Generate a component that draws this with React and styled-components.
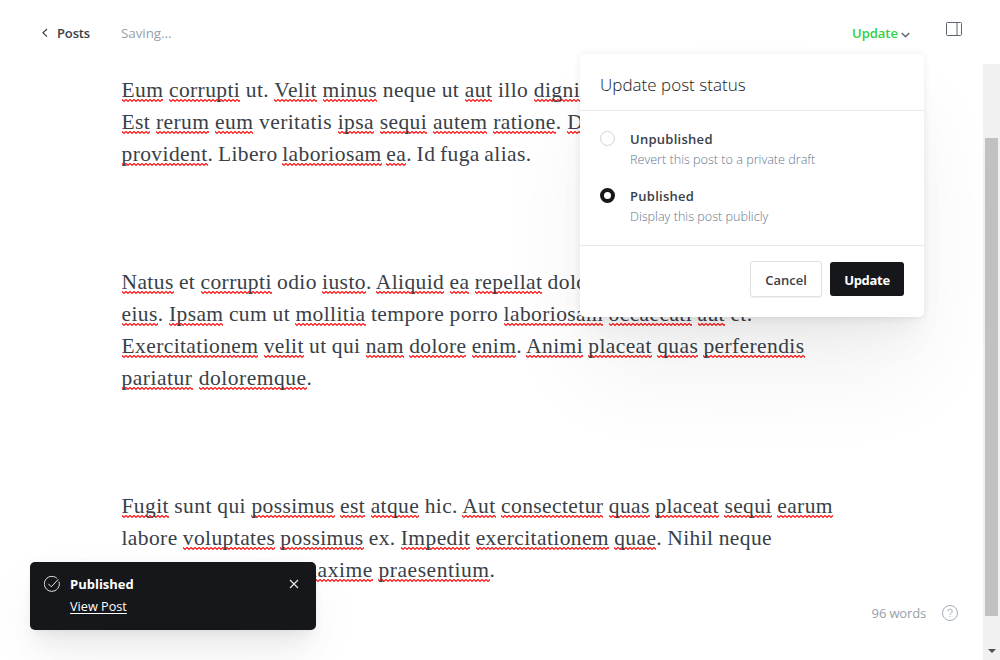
import React from 'react';
import styled, { createGlobalStyle } from 'styled-components';

const Global = createGlobalStyle`
  * { box-sizing: border-box; }
  body { margin: 0; background: #fff; overflow: hidden; font-family: 'Open Sans', 'Noto Sans', sans-serif; }
`;

const Screen = styled.div`
  position: relative;
  height: 660px;
  display: flex;
  flex-direction: column;
  overflow: hidden;
`;

const Header = styled.header`
  height: 64px;
  flex: none;
  display: flex;
  align-items: center;
  padding: 2px 38px 0 42px;
  font-size: 13px;
  line-height: 20px;
`;

const BackLink = styled.a`
  display: flex;
  align-items: center;
  gap: 9px;
  width: 79px;
  font-weight: 600;
  color: #394047;
  letter-spacing: -0.15px;
`;

const Status = styled.span`
  flex: 1;
  color: #95a1ad;
  font-size: 13.4px;
  letter-spacing: -0.05px;
`;

const Trigger = styled.button`
  display: flex;
  align-items: center;
  gap: 3px;
  margin-right: 36px;
  padding: 0;
  border: 0;
  background: none;
  font: 600 13px/20px 'Open Sans', sans-serif;
  color: #30cf43;
`;

const Chevron = styled.svg`
  margin-top: 3px;
`;

const PanelIcon = styled.svg`
  margin-top: -8px;
`;

const Body = styled.div`
  flex: 1;
  min-height: 0;
  display: flex;
`;

const Article = styled.main`
  flex: 1;
  padding: 10px 0 0 121.5px;
  font-family: 'Liberation Serif', serif;
  font-size: 21.5px;
  color: #394047;
`;

const Paragraph = styled.p`
  margin: 0 0 96px;
`;

const Line = styled.span`
  display: block;
  width: ${p => p.$w}px;
  height: 32px;
  line-height: 32px;
  letter-spacing: ${p => p.$ls || 0.4}px;
  word-spacing: -1.3px;
  white-space: nowrap;
  text-align-last: justify;
`;

const Misspelt = styled.span`
  background: url("data:image/svg+xml,%3Csvg xmlns='http://www.w3.org/2000/svg' width='4' height='3'%3E%3Cpath d='M-1 -.5L2 2.4L5 -.5' fill='none' stroke='%23f00' stroke-width='1.05'/%3E%3C/svg%3E") repeat-x left bottom;
`;

const Scrollbar = styled.div`
  width: 17px;
  background: #f1f1f1;
  display: flex;
  flex-direction: column;
  align-items: center;
  justify-content: flex-end;
`;

const Thumb = styled.div`
  width: 13px;
  height: 478px;
  background: #c1c1c1;
  margin-bottom: 33px;
`;

const Arrow = styled.div`
  border: 4px solid transparent;
  border-top-color: #505050;
  border-bottom: 0;
  margin-bottom: 7px;
`;

const Popover = styled.section`
  position: absolute;
  left: 580px;
  top: 54px;
  width: 344px;
  height: 263px;
  border-radius: 5px;
  background: #fff;
  box-shadow: 0 0 7px rgba(0,0,0,.08), 0 5.1px 5.3px -5px rgba(0,0,0,.015), 0 9.5px 10px -5px rgba(0,0,0,.02), 0 17px 17.9px -5px rgba(0,0,0,.022), 0 31.8px 33.4px -5px rgba(0,0,0,.028), 0 60px 100px -5px rgba(0,0,0,.06);
`;

const PopoverTitle = styled.h2`
  margin: 0;
  height: 57px;
  padding: 19px 20px 0;
  border-bottom: 1px solid #e5e9ed;
  font-size: 17px;
  line-height: 24px;
  font-weight: 300;
  letter-spacing: 0.02px;
  color: #15191d;
`;

const Options = styled.div`
  height: 134px;
  padding: 18px 20px 0;
  display: flex;
  flex-direction: column;
  gap: 17px;
`;

const Option = styled.div`
  height: 40px;
  display: flex;
  gap: 15px;
`;

const Radio = styled.span`
  width: 15px;
  height: 15px;
  margin-top: 2px;
  border-radius: 50%;
  border: ${p => (p.$on ? '4px solid #15171a' : '1px solid #ced4d9')};
`;

const OptionName = styled.div`
  font-size: 13px;
  line-height: 20px;
  font-weight: 600;
  letter-spacing: 0.27px;
  color: #394047;
`;

const OptionHint = styled.div`
  padding-top: 1px;
  font-size: 12.6px;
  line-height: 20px;
  font-weight: 300;
  color: #5f7890;
`;

const Actions = styled.footer`
  border-top: 1px solid #e5e9ed;
  padding: 15px 20px 0;
  display: flex;
  align-items: center;
  justify-content: flex-end;
  gap: 8px;
`;

const Button = styled.button`
  width: ${p => (p.$dark ? 74 : 72)}px;
  height: ${p => (p.$dark ? 34 : 36)}px;
  padding: 2px 0 0;
  border: ${p => (p.$dark ? '0' : '1px solid #dde1e5')};
  border-radius: 3px;
  background: ${p => (p.$dark ? '#15171a' : '#fff')};
  color: ${p => (p.$dark ? '#fff' : '#394047')};
  box-shadow: ${p => (p.$dark ? 'none' : '0 1px 1px rgba(0,0,0,.06)')};
  font: ${p => (p.$dark ? 700 : 600)} 13px/20px 'Open Sans', sans-serif;
  letter-spacing: ${p => (p.$dark ? -0.3 : 0)}px;
`;

const Toast = styled.aside`
  position: absolute;
  left: 30px;
  top: 562px;
  width: 286px;
  height: 68px;
  padding: 12px 17px 0 14px;
  display: flex;
  gap: 10px;
  border-radius: 5px;
  background: #15171a;
  color: #fff;
  font-size: 13px;
  box-shadow: 0 0 7px rgba(0,0,0,.04), 0 9px 10px -5px rgba(0,0,0,.03), 0 17px 18px -5px rgba(0,0,0,.03), 0 32px 34px -5px rgba(0,0,0,.03), 0 20px 60px rgba(0,0,0,.04);
`;

const CheckIcon = styled.svg`
  margin-top: 2px;
`;

const CloseIcon = styled.svg`
  margin-top: 5px;
`;

const ToastText = styled.div`
  flex: 1;
`;

const ToastTitle = styled.div`
  line-height: 20px;
  font-weight: 700;
`;

const ToastLink = styled.a`
  display: block;
  margin-top: 2px;
  font-size: 12.7px;
  line-height: 20px;
  text-decoration: underline;
  text-underline-offset: 2px;
`;

const Footer = styled.div`
  position: absolute;
  right: 42px;
  top: 604px;
  display: flex;
  align-items: center;
  gap: 16px;
  font-size: 13px;
  line-height: 19px;
  letter-spacing: -0.15px;
  color: #95a1ad;
`;

const HelpIcon = styled.svg`
  margin-top: -2px;
`;

// Underscores wrap the words flagged by the spell checker.
const paragraphs = [
  [
    [519.5, '_Eum_ _corrupti_ ut. _Velit_ _minus_ neque ut _aut_ illo _dignissimos_'],
    [525, '_Est_ _rerum_ _eum_ veritatis _ipsa_ _sequi_ _autem_ _ratione_. _Dolorem_'],
    [410, '_provident_. Libero _laboriosam_ _ea_. Id fuga alias.'],
  ],
  [
    [473.5, '_Natus_ et _corrupti_ odio _iusto_. _Aliquid_ _ea_ _repellat_ dolor'],
    [631, '_eius_. _Ipsam_ cum ut _mollitia_ tempore porro _laboriosam_ _occaecati_ _aut_ et.'],
    [683, '_Exercitationem_ _velit_ ut qui _nam_ _dolore_ _enim_. _Animi_ _placeat_ _quas_ _perferendis_'],
    [191, '_pariatur_ _doloremque_.', 0.52],
  ],
  [
    [711.5, '_Fugit_ sunt qui _possimus_ _est_ _atque_ hic. _Aut_ _consectetur_ _quas_ _placeat_ _sequi_ _earum_'],
    [650.5, 'labore _voluptates_ _possimus_ ex. _Impedit_ _exercitationem_ _quae_. Nihil neque'],
    [374, '_voluptates_ _eligendi_ _maxime_ _praesentium_.', 0.55],
  ],
];

const renderText = text =>
  text.split(/(_[^_]+_)/).map((t, i) => (t[0] === '_' ? <Misspelt key={i}>{t.slice(1, -1)}</Misspelt> : t));

export default function App() {
  return (
    <Screen>
      <Global />
      <Header>
        <BackLink>
          <svg width="6" height="10" viewBox="0 0 6 10" fill="none" stroke="#394047" strokeWidth="1.2"><path d="M5 1L1 4.8l4 3.8" /></svg>
          Posts
        </BackLink>
        <Status>Saving...</Status>
        <Trigger>
          Update
          <Chevron width="9" height="6" viewBox="0 0 9 6" fill="none" stroke="#626d79" strokeWidth="1.5"><path d="M.7 1l3.8 3.6L8.3 1" /></Chevron>
        </Trigger>
        <PanelIcon width="16" height="14" viewBox="0 0 16 14" fill="none" stroke="#5d666f"><rect x=".5" y=".5" width="15" height="13" rx="1" /><path d="M11 .5v13" /></PanelIcon>
      </Header>
      <Body>
        <Article>
          {paragraphs.map((lines, i) => (
            <Paragraph key={i}>
              {lines.map(([w, text, ls]) => <Line key={text} $w={w} $ls={ls}>{renderText(text)}</Line>)}
            </Paragraph>
          ))}
        </Article>
        <Scrollbar><Thumb /><Arrow /></Scrollbar>
      </Body>
      <Footer>
        96 words
        <HelpIcon width="16" height="16" viewBox="0 0 16 16" fill="none" stroke="#a3aebb"><circle cx="8" cy="8" r="7.5" /><path d="M5.8 6.3a2.2 2.2 0 1 1 3.3 1.9C8.3 8.6 8 8.9 8 9.8M8 11.2v1" /></HelpIcon>
      </Footer>
      <Popover>
        <PopoverTitle>Update post status</PopoverTitle>
        <Options>
          <Option>
            <Radio />
            <div><OptionName>Unpublished</OptionName><OptionHint>Revert this post to a private draft</OptionHint></div>
          </Option>
          <Option>
            <Radio $on />
            <div><OptionName>Published</OptionName><OptionHint>Display this post publicly</OptionHint></div>
          </Option>
        </Options>
        <Actions><Button>Cancel</Button><Button $dark>Update</Button></Actions>
      </Popover>
      <Toast>
        <CheckIcon width="16" height="16" viewBox="0 0 16 16" fill="none" stroke="#e4e6e8"><path d="M15 5.6A7.5 7.5 0 1 1 12.9 2.3M4.3 7.8l3 3 7-7.5" /></CheckIcon>
        <ToastText><ToastTitle>Published</ToastTitle><ToastLink>View Post</ToastLink></ToastText>
        <CloseIcon width="10" height="10" viewBox="0 0 10 10" stroke="#e4e6e8" strokeWidth="1.2"><path d="M1 1l8 8M9 1L1 9" /></CloseIcon>
      </Toast>
    </Screen>
  );
}
